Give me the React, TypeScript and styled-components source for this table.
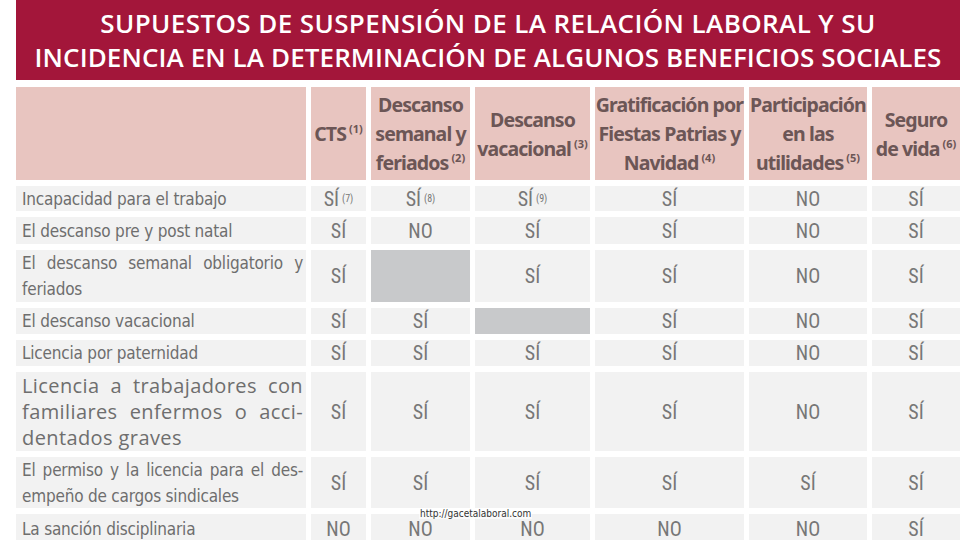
import React from "react";
import styled, { createGlobalStyle } from "styled-components";

const Global = createGlobalStyle`
  html, body { margin: 0; padding: 0; background: #ffffff; }
  body { width: 960px; height: 540px; overflow: hidden; }
`;

const Page = styled.div`
  position: relative;
  width: 960px;
  height: 540px;
  overflow: hidden;
  padding-left: 16px;
  box-sizing: border-box;
  background: #ffffff;
`;

const TitleBand = styled.header`
  height: 80px;
  background: #a3163a;
  color: #ffffff;
  display: flex;
  flex-direction: column;
  align-items: center;
  justify-content: center;
  font-family: "Open Sans", "Noto Sans", sans-serif;
  font-weight: 600;
  font-size: 26px;
  line-height: 34px;
  margin-bottom: 7px;
`;

const TitleLine = styled.div<{ $spacing?: number }>`
  white-space: nowrap;
  letter-spacing: ${(p) => p.$spacing ?? 0}px;
`;

const Table = styled.div`
  display: grid;
  grid-template-columns: 290px 55px 99px 115px 149px 118px 1fr;
  grid-template-rows: 93px 25px 27px 52px 26px 26px 79px 51px 30px;
  column-gap: 5px;
  row-gap: 6px;
`;

const HeadCell = styled.div`
  background: #e8c5c0;
  color: #6c5656;
  font-family: "Noto Sans", sans-serif;
  font-stretch: condensed;
  font-weight: 700;
  font-size: 19.5px;
  letter-spacing: -0.9px;
  line-height: 29px;
  display: flex;
  align-items: center;
  justify-content: center;
  text-align: center;
  white-space: nowrap;
`;

const Sup = styled.sup<{ $head?: boolean }>`
  font-size: ${(p) => (p.$head ? "11px" : "10px")};
  font-weight: ${(p) => (p.$head ? 700 : 400)};
  letter-spacing: 0;
  line-height: 0;
  vertical-align: ${(p) => (p.$head ? "8px" : "7px")};
  margin-left: 3px;
`;

const LabelCell = styled.div<{ $wide?: boolean }>`
  background: #f2f2f2;
  color: #6e6e6e;
  font-family: ${(p) => (p.$wide ? `"Open Sans", sans-serif` : `"DejaVu Sans Condensed", "DejaVu Sans", sans-serif`)};
  font-size: ${(p) => (p.$wide ? "20px" : "17px")};
  letter-spacing: ${(p) => (p.$wide ? "0.4px" : "-0.2px")};
  line-height: 26px;
  padding: 0 3px 0 6px;
  display: flex;
  flex-direction: column;
  justify-content: center;
`;

const LabelLine = styled.span<{ $justify?: boolean }>`
  display: block;
  white-space: nowrap;
  text-align: ${(p) => (p.$justify ? "justify" : "left")};
  text-align-last: ${(p) => (p.$justify ? "justify" : "left")};
`;

const ValueCell = styled.div<{ $blank?: boolean }>`
  background: ${(p) => (p.$blank ? "#c8c9cb" : "#f2f2f2")};
  color: #777777;
  font-family: "Roboto", sans-serif;
  font-stretch: condensed;
  font-size: 20px;
  display: flex;
  align-items: center;
  justify-content: center;
`;

const Watermark = styled.div`
  position: absolute;
  left: 419px;
  top: 508px;
  font-family: "DejaVu Sans Condensed", sans-serif;
  font-size: 10px;
  color: #333333;
  background: rgba(255, 255, 255, 0.6);
  padding: 0 1px;
`;

type Val = string | [string, string] | null;

const headers: { lines: string[]; sup: string }[] = [
  { lines: ["CTS"], sup: "(1)" },
  { lines: ["Descanso", "semanal y", "feriados"], sup: "(2)" },
  { lines: ["Descanso", "vacacional"], sup: "(3)" },
  { lines: ["Gratificación por", "Fiestas Patrias y", "Navidad"], sup: "(4)" },
  { lines: ["Participación", "en las", "utilidades"], sup: "(5)" },
  { lines: ["Seguro", "de vida"], sup: "(6)" },
];

const rows: { label: string[]; wide?: boolean; vals: Val[] }[] = [
  { label: ["Incapacidad para el trabajo"], vals: [["SÍ", "(7)"], ["SÍ", "(8)"], ["SÍ", "(9)"], "SÍ", "NO", "SÍ"] },
  { label: ["El descanso pre y post natal"], vals: ["SÍ", "NO", "SÍ", "SÍ", "NO", "SÍ"] },
  { label: ["El descanso semanal obligatorio y", "feriados"], vals: ["SÍ", null, "SÍ", "SÍ", "NO", "SÍ"] },
  { label: ["El descanso vacacional"], vals: ["SÍ", "SÍ", null, "SÍ", "NO", "SÍ"] },
  { label: ["Licencia por paternidad"], vals: ["SÍ", "SÍ", "SÍ", "SÍ", "NO", "SÍ"] },
  {
    label: ["Licencia a trabajadores con", "familiares enfermos o acci-", "dentados graves"],
    wide: true,
    vals: ["SÍ", "SÍ", "SÍ", "SÍ", "NO", "SÍ"],
  },
  { label: ["El permiso y la licencia para el des-", "empeño de cargos sindicales"], vals: ["SÍ", "SÍ", "SÍ", "SÍ", "SÍ", "SÍ"] },
  { label: ["La sanción disciplinaria"], vals: ["NO", "NO", "NO", "NO", "NO", "SÍ"] },
];

export default function App() {
  return (
    <Page>
      <Global />
      <TitleBand>
        <TitleLine $spacing={0.4}>SUPUESTOS DE SUSPENSIÓN DE LA RELACIÓN LABORAL Y SU</TitleLine>
        <TitleLine $spacing={0.1}>INCIDENCIA EN LA DETERMINACIÓN DE ALGUNOS BENEFICIOS SOCIALES</TitleLine>
      </TitleBand>
      <Table>
        <HeadCell />
        {headers.map((h, i) => (
          <HeadCell key={i}>
            <div>
              {h.lines.map((l, j) => (
                <div key={j}>
                  {l}
                  {j === h.lines.length - 1 && <Sup $head>{h.sup}</Sup>}
                </div>
              ))}
            </div>
          </HeadCell>
        ))}
        {rows.map((r, i) => (
          <React.Fragment key={i}>
            <LabelCell $wide={r.wide}>
              {r.label.map((l, j) => (
                <LabelLine key={j} $justify={r.label.length > 1 && j < r.label.length - 1}>
                  {l}
                </LabelLine>
              ))}
            </LabelCell>
            {r.vals.map((v, j) =>
              v === null ? (
                <ValueCell key={j} $blank />
              ) : Array.isArray(v) ? (
                <ValueCell key={j}>
                  {v[0]}
                  <Sup>{v[1]}</Sup>
                </ValueCell>
              ) : (
                <ValueCell key={j}>{v}</ValueCell>
              )
            )}
          </React.Fragment>
        ))}
      </Table>
      <Watermark>http://gacetalaboral.com</Watermark>
    </Page>
  );
}
